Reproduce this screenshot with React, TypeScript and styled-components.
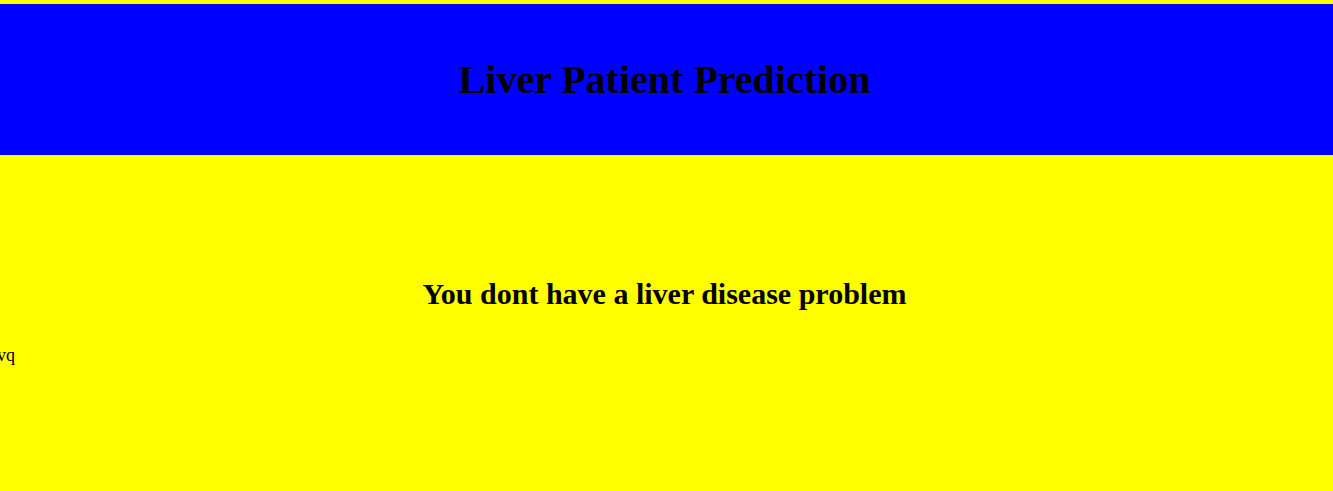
import React from "react";
import styled, { createGlobalStyle } from "styled-components";

const Global = createGlobalStyle`
  html, body {
    margin: 0;
    padding: 0;
    background: #ffff00;
    font-family: "Liberation Serif", "Times New Roman", serif;
    color: #000;
  }
  body { padding-top: 4px; min-height: 487px; }
`;

const Header = styled.header`
  background: #0000ff;
  height: 151px;
  display: flex;
  align-items: center;
  justify-content: center;
  padding-right: 4px;
`;

const Title = styled.h1`
  margin: 0;
  font-size: 40px;
  font-weight: bold;
  line-height: 1;
`;

const Main = styled.main`
  display: flex;
  flex-direction: column;
  padding-right: 4px;
`;

const Result = styled.h2`
  margin: 124px 0 0;
  text-align: center;
  font-size: 30px;
  font-weight: bold;
  line-height: 1;
`;

const Note = styled.p`
  margin: 36px 0 0 -3px;
  font-size: 18px;
  line-height: 1.15;
`;

export default function App() {
  return (
    <>
      <Global />
      <Header>
        <Title>Liver Patient Prediction</Title>
      </Header>
      <Main>
        <Result>You dont have a liver disease problem</Result>
        <Note>vq</Note>
      </Main>
    </>
  );
}
